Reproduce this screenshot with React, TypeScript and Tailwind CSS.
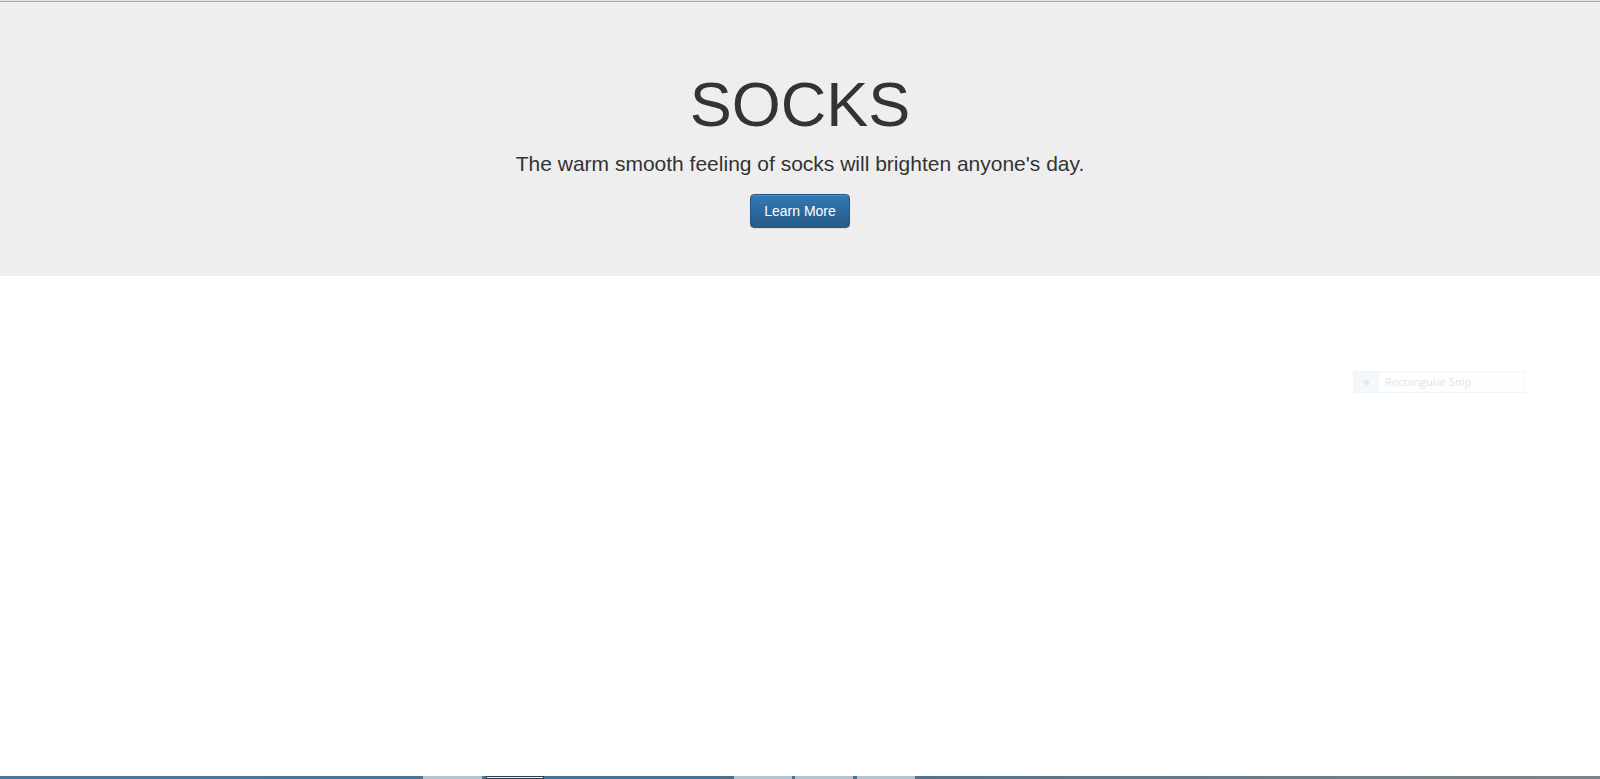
export default function App() {
  const tabs = [
    { left: 423, w: 59, cls: "bg-[#b4c3d1]" },
    { left: 486, w: 58, cls: "bg-[#eef2f6] border border-[#2c3e50]" },
    { left: 734, w: 58, cls: "bg-[#b4c3d1]" },
    { left: 795, w: 58, cls: "bg-[#b4c3d1]" },
    { left: 857, w: 58, cls: "bg-[#b4c3d1]" },
  ];

  return (
    <div className="relative flex h-[779px] flex-col overflow-hidden bg-white font-['Liberation_Sans',Arial,sans-serif] text-[#333]">
      <div className="h-px bg-[#e4e4e4]" />
      <div className="h-px bg-[#a8a8a8]" />

      <section className="flex flex-col items-center bg-[#eeeeee] px-4 pt-[48px] pb-[48px]">
        <h1 className="mt-[20px] mb-[10px] text-[63px] leading-[1.1] font-normal">SOCKS</h1>
        <p className="mb-[15px] text-[21px] leading-[30px]">
          The warm smooth feeling of socks will brighten anyone's day.
        </p>
        <a
          href="#"
          className="inline-block rounded-[4px] border border-[#245580] bg-gradient-to-b from-[#337ab7] to-[#265a88] px-[13px] py-[6px] text-[14px] leading-[20px] text-white shadow-[inset_0_1px_0_rgba(255,255,255,0.15),0_1px_1px_rgba(0,0,0,0.075)]"
        >
          Learn More
        </a>
      </section>

      <main className="flex-1" />

      {/* faint ghost of a snipping tool tooltip */}
      <div className="absolute left-[1353px] top-[371px] flex h-[22px] w-[172px] border border-[#eef5fb] bg-[#fdfeff]">
        <div className="flex w-[25px] items-center justify-center border-r border-[#eef5fb] bg-[#f3f8fc]">
          <span className="h-[5px] w-[5px] rounded-full bg-[#e6e6e6]" />
        </div>
        <span className="pl-[6px] font-['Open_Sans',sans-serif] text-[11px] leading-[20px] text-[#e4e4e4]">
          Rectangular Snip
        </span>
      </div>

      <div className="relative h-[3px] bg-gradient-to-r from-[#4f7896] via-[#4a7090] to-[#7d8588]">
        {tabs.map((t) => (
          <div
            key={t.left}
            className={`absolute top-0 h-[3px] ${t.cls}`}
            style={{ left: t.left, width: t.w }}
          />
        ))}
      </div>
    </div>
  );
}
